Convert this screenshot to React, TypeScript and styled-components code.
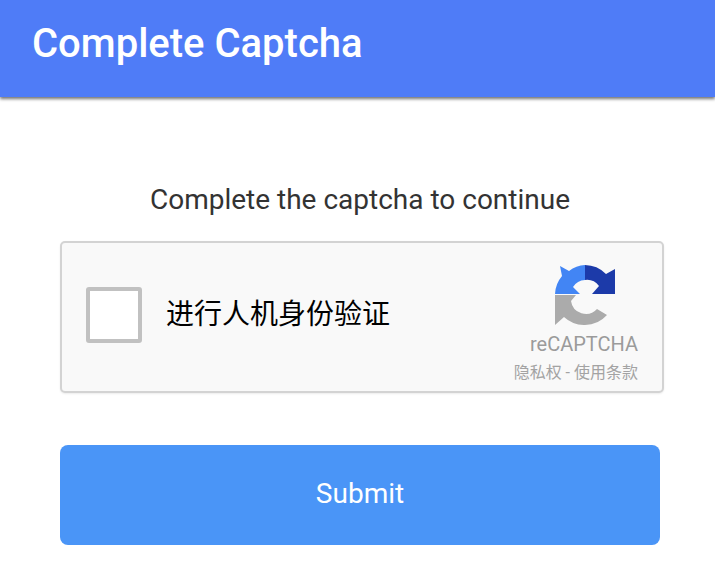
import React from 'react';
import styled, { createGlobalStyle } from 'styled-components';

const GlobalStyle = createGlobalStyle`
  html, body {
    margin: 0;
    background: #fff;
    font-family: Roboto, "Noto Sans CJK SC", sans-serif;
  }
`;

const Page = styled.div`
  width: 715px;
  height: 564px;
  overflow: hidden;
  display: flex;
  flex-direction: column;
`;

const Header = styled.header`
  height: 97px;
  flex-shrink: 0;
  background-color: #4f7cf7;
  box-shadow: 0 2px 3px rgba(0, 0, 0, 0.55);
  display: flex;
  align-items: center;
  padding: 0 32px 10px;
  box-sizing: border-box;
`;

const Title = styled.h1`
  margin: 0;
  color: #fff;
  font-size: 40px;
  font-weight: 500;
`;

const Content = styled.main`
  width: 720px;
  box-sizing: border-box;
  flex-shrink: 0;
  display: flex;
  flex-direction: column;
  padding: 86px 60px 0;
`;

const Prompt = styled.p`
  margin: 0;
  height: 34px;
  line-height: 34px;
  font-size: 28px;
  color: #333;
  text-align: center;
`;

const CaptchaBox = styled.div`
  width: 604px;
  height: 152px;
  margin-top: 24px;
  box-sizing: border-box;
  background-color: #f9f9f9;
  border: 2px solid #d3d3d3;
  border-radius: 5px;
  box-shadow: 0 1px 2px rgba(0, 0, 0, 0.08);
  display: flex;
  align-items: center;
  justify-content: space-between;
  padding: 0 24px;
`;

const CheckArea = styled.div`
  display: flex;
  align-items: center;
  gap: 24px;
  padding-bottom: 4px;
`;

const CheckBox = styled.div`
  width: 56px;
  height: 56px;
  box-sizing: border-box;
  background-color: #fff;
  border: 4px solid #c1c1c1;
  border-radius: 3px;
`;

const CheckLabel = styled.span`
  font-size: 28px;
  color: #000;
  margin-bottom: 6px;
`;

const Brand = styled.div`
  display: flex;
  flex-direction: column;
  align-items: flex-end;
  align-self: stretch;
  padding-top: 22px;
  box-sizing: border-box;
`;

const LogoMark = styled.svg`
  display: block;
  margin-right: 23px;
`;

const BrandName = styled.span`
  font-size: 20px;
  line-height: 24px;
  color: #9b9b9b;
  margin-top: 7px;
`;

const BrandLinks = styled.span`
  font-size: 16px;
  line-height: 20px;
  color: #a3a3a3;
  margin-top: 7px;
  white-space: nowrap;
`;

const SubmitButton = styled.button`
  width: 600px;
  height: 100px;
  margin-top: 52px;
  padding: 0 0 4px;
  border: none;
  border-radius: 8px;
  background-color: #4a95f7;
  color: #fff;
  font-family: inherit;
  font-size: 28px;
`;

function RecaptchaLogo() {
  return (
    <LogoMark width="60" height="60" viewBox="0 0 60 60">
      <path d="M30 0 A30 30 0 0 1 51 9 L60 4 V29 H37 L44 21 A15 15 0 0 0 30 15 Z" fill="#1c3aa9" />
      <path d="M30 0 V15 A15 15 0 0 0 18 22 L25 29 H0 A30 30 0 0 1 7 11 L5 1 L14 6 A30 30 0 0 1 30 0 Z" fill="#4285f4" />
      <path d="M0 30 H21 L16 36 A15 15 0 0 0 42 44 L52 50 A30 30 0 0 1 30 60 A30 30 0 0 1 9 52 L0 60 Z" fill="#ababab" />
    </LogoMark>
  );
}

export default function App() {
  return (
    <Page>
      <GlobalStyle />
      <Header>
        <Title>Complete Captcha</Title>
      </Header>
      <Content>
        <Prompt>Complete the captcha to continue</Prompt>
        <CaptchaBox>
          <CheckArea>
            <CheckBox />
            <CheckLabel>进行人机身份验证</CheckLabel>
          </CheckArea>
          <Brand>
            <RecaptchaLogo />
            <BrandName>reCAPTCHA</BrandName>
            <BrandLinks>隐私权 - 使用条款</BrandLinks>
          </Brand>
        </CaptchaBox>
        <SubmitButton>Submit</SubmitButton>
      </Content>
    </Page>
  );
}
